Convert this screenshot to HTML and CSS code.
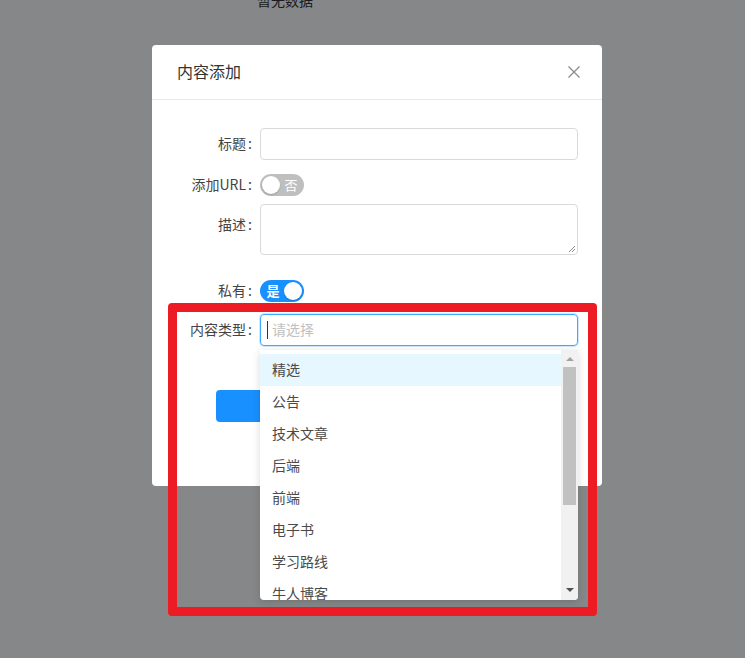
FILE: index.html
```html
<!DOCTYPE html>
<html lang="zh-CN">
<head>
<meta charset="utf-8">
<title>内容添加</title>
<link rel="stylesheet" href="styles.css">
</head>
<body>
<div class="page">
  <div class="empty">暂无数据</div>
</div>
<div class="mask"></div>
<div class="modal">
  <div class="modal-header">
    <span class="modal-title">内容添加</span>
    <span class="close">
      <svg width="12" height="12" viewBox="0 0 12 12"><path d="M0.5 0.5 L11.5 11.5 M11.5 0.5 L0.5 11.5" stroke="#8c8c8c" stroke-width="1.3" fill="none"/></svg>
    </span>
  </div>
  <div class="modal-body">
    <div class="row row-title">
      <label class="label">标题</label>
      <div class="input"></div>
    </div>
    <div class="row row-url">
      <label class="label">添加URL</label>
      <div class="switch off"><span class="knob"></span><span class="switch-text">否</span></div>
    </div>
    <div class="row row-desc">
      <label class="label label-top">描述</label>
      <div class="textarea">
        <svg class="grip" width="9" height="9" viewBox="0 0 9 9"><path d="M8 2 L2 8 M8 5 L5 8" stroke="#8a8a8a" stroke-width="1" fill="none"/></svg>
      </div>
    </div>
    <div class="row row-private">
      <label class="label">私有</label>
      <div class="switch on"><span class="switch-text">是</span><span class="knob"></span></div>
    </div>
    <div class="row row-type">
      <label class="label">内容类型</label>
      <div class="input focused"><span class="caret"></span><span class="placeholder">请选择</span></div>
    </div>
    <div class="actions">
      <button class="btn-primary">提交</button>
    </div>
  </div>
</div>
<div class="dropdown">
  <ul class="options">
    <li class="option active">精选</li>
    <li class="option">公告</li>
    <li class="option">技术文章</li>
    <li class="option">后端</li>
    <li class="option">前端</li>
    <li class="option">电子书</li>
    <li class="option">学习路线</li>
    <li class="option">牛人博客</li>
  </ul>
  <div class="scrollbar">
    <span class="arrow up"></span>
    <span class="thumb"></span>
    <span class="arrow down"></span>
  </div>
</div>
<div class="annotation"></div>
</body>
</html>
```

FILE: styles.css
```css
* { box-sizing: border-box; }
html, body {
  margin: 0;
  padding: 0;
  width: 745px;
  height: 658px;
  overflow: hidden;
  background: #ffffff;
  font-family: "Noto Sans CJK SC", "Noto Sans", "Liberation Sans", sans-serif;
  font-size: 14px;
}
.page {
  height: 658px;
  padding-left: 257px;
}
.empty {
  margin-top: -10px;
  line-height: 20px;
  color: #333;
}
.mask {
  position: absolute;
  inset: 0;
  background: rgba(2, 4, 6, 0.48);
}
.modal {
  position: absolute;
  left: 152px;
  top: 45px;
  width: 450px;
  background: #fff;
  border-radius: 4px;
}
.modal-header {
  height: 55px;
  padding: 0 25px;
  display: flex;
  align-items: center;
  justify-content: space-between;
  border-bottom: 1px solid #e8e8e8;
}
.modal-title {
  font-size: 16px;
  color: #333;
  line-height: 22px;
  margin-top: -2px;
}
.close {
  display: flex;
  margin-right: -3px;
  margin-top: -1px;
}
.modal-body {
  padding: 28px 24px 64px 0;
}
.row {
  display: flex;
  align-items: center;
}
.label {
  width: 108px;
  text-align: right;
  color: #444;
  line-height: 20px;
  padding-bottom: 2px;
  flex: none;
}
.label::after {
  content: ":";
  margin: 0 8px 0 2px;
}
.row-title { height: 32px; }
.row-url { margin-top: 14px; height: 22px; }
.row-desc { margin-top: 8px; align-items: flex-start; }
.row-private { margin-top: 25px; height: 22px; }
.row-type { margin-top: 12px; height: 32px; }
.label-top { margin-top: 10px; }
.input {
  flex: 1;
  height: 32px;
  border: 1px solid #d9d9d9;
  border-radius: 4px;
  display: flex;
  align-items: center;
  padding-left: 6px;
}
.input.focused {
  border-color: #40a9ff;
  box-shadow: 0 0 0 1px rgba(24, 144, 255, 0.2);
}
.caret {
  width: 1px;
  height: 18px;
  background: #333;
  margin-right: 4px;
}
.placeholder {
  color: #bfbfbf;
  line-height: 20px;
  padding-bottom: 2px;
}
.textarea {
  flex: 1;
  height: 51px;
  border: 1px solid #d9d9d9;
  border-radius: 4px;
  position: relative;
}
.grip {
  position: absolute;
  right: 1px;
  bottom: 1px;
}
.switch {
  width: 44px;
  height: 22px;
  border-radius: 11px;
  display: flex;
  align-items: center;
  padding: 0 2px;
  color: #fff;
  font-size: 13px;
}
.switch.off {
  background: #bfbfbf;
}
.switch.on {
  background: #1890ff;
  font-weight: bold;
}
.knob {
  width: 18px;
  height: 18px;
  border-radius: 50%;
  background: #fff;
  box-shadow: 0 1px 2px rgba(0, 35, 11, 0.2);
  flex: none;
}
.switch-text {
  flex: 1;
  text-align: center;
  line-height: 18px;
  padding-bottom: 1px;
}
.actions {
  margin-top: 44px;
  padding-left: 64px;
  display: flex;
}
.btn-primary {
  width: 130px;
  height: 32px;
  border: none;
  border-radius: 4px;
  background: #1890ff;
  color: #fff;
  font-family: inherit;
  font-size: 14px;
}
.dropdown {
  position: absolute;
  left: 260px;
  top: 350px;
  width: 318px;
  height: 250px;
  background: #fff;
  border-radius: 0 0 4px 4px;
  box-shadow: 0 2px 8px rgba(0, 0, 0, 0.15);
  overflow: hidden;
  display: flex;
}
.options {
  list-style: none;
  margin: 0;
  padding: 4px 0 0;
  flex: 1;
}
.option {
  height: 32px;
  line-height: 30px;
  padding: 0 0 2px 12px;
  color: #4a4a4a;
}
.option.active {
  background: #e6f7ff;
}
.scrollbar {
  width: 17px;
  background: #f1f1f1;
  display: flex;
  flex-direction: column;
  align-items: center;
  padding: 0 2px;
}
.arrow {
  width: 0;
  height: 0;
  border-left: 4px solid transparent;
  border-right: 4px solid transparent;
  flex: none;
}
.arrow.up {
  border-bottom: 4px solid #a3a3a3;
  margin-top: 7px;
}
.arrow.down {
  border-top: 4px solid #505050;
  margin-top: 83px;
}
.thumb {
  width: 13px;
  height: 138px;
  background: #c1c1c1;
  margin-top: 6px;
  flex: none;
}
.annotation {
  position: absolute;
  left: 168px;
  top: 303px;
  width: 429px;
  height: 313px;
  border: 9px solid #ed1c24;
  border-radius: 4px;
}
```
